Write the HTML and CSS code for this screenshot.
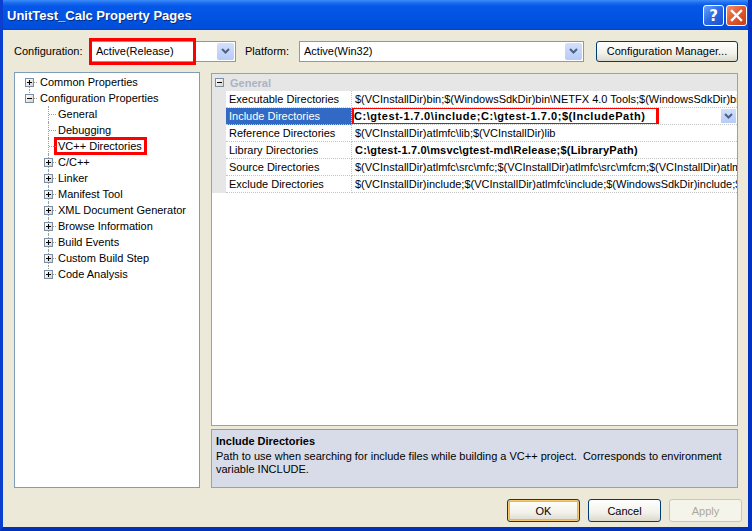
FILE: index.html
```html
<!DOCTYPE html>
<html>
<head>
<meta charset="utf-8">
<link rel="stylesheet" href="styles.css">
</head>
<body>
<div class="window">
  <div class="titlebar">
    <span class="title">UnitTest_Calc Property Pages</span>
    <div class="tbtns">
      <span class="tbtn help">?</span>
      <span class="tbtn close"><svg width="13" height="13" viewBox="0 0 13 13"><path d="M2 2 L11 11 M11 2 L2 11" stroke="#fff" stroke-width="2.4" stroke-linecap="square"/></svg></span>
    </div>
  </div>
  <div class="client">
    <div class="configrow">
      <span class="lbl cfg-lbl">Configuration:</span>
      <div class="combo combo-cfg">
        <span class="combo-text">Active(Release)</span>
        <span class="dd"><svg width="9" height="6" viewBox="0 0 9 6"><path d="M1 1 L4.5 4.5 L8 1" fill="none" stroke="#4D6185" stroke-width="2"/></svg></span>
        <span class="redbox rb-cfg"></span>
      </div>
      <span class="lbl plat-lbl">Platform:</span>
      <div class="combo combo-plat">
        <span class="combo-text">Active(Win32)</span>
        <span class="dd"><svg width="9" height="6" viewBox="0 0 9 6"><path d="M1 1 L4.5 4.5 L8 1" fill="none" stroke="#4D6185" stroke-width="2"/></svg></span>
      </div>
      <button class="btn cfgmgr">Configuration Manager...</button>
    </div>
    <div class="main">
      <div class="tree">
        <div class="trow l0"><span class="cell vbot"><span class="xbox plus"></span></span><span class="ttext">Common Properties</span></div>
        <div class="trow l0"><span class="cell vtop"><span class="xbox minus"></span></span><span class="ttext">Configuration Properties</span></div>
        <div class="trow l1"><span class="cell vfull"></span><span class="ttext">General</span></div>
        <div class="trow l1"><span class="cell vfull"></span><span class="ttext">Debugging</span></div>
        <div class="trow l1"><span class="cell vfull"></span><span class="ttext sel">VC++ Directories</span></div>
        <div class="trow l1"><span class="cell vfull"><span class="xbox plus"></span></span><span class="ttext">C/C++</span></div>
        <div class="trow l1"><span class="cell vfull"><span class="xbox plus"></span></span><span class="ttext">Linker</span></div>
        <div class="trow l1"><span class="cell vfull"><span class="xbox plus"></span></span><span class="ttext">Manifest Tool</span></div>
        <div class="trow l1"><span class="cell vfull"><span class="xbox plus"></span></span><span class="ttext">XML Document Generator</span></div>
        <div class="trow l1"><span class="cell vfull"><span class="xbox plus"></span></span><span class="ttext">Browse Information</span></div>
        <div class="trow l1"><span class="cell vfull"><span class="xbox plus"></span></span><span class="ttext">Build Events</span></div>
        <div class="trow l1"><span class="cell vfull"><span class="xbox plus"></span></span><span class="ttext">Custom Build Step</span></div>
        <div class="trow l1"><span class="cell vtop"><span class="xbox plus"></span></span><span class="ttext">Code Analysis</span></div>
      </div>
      <div class="right">
        <div class="grid">
          <div class="grow cat">
            <span class="gut"><span class="xbox minus catbox"></span></span>
            <span class="catname">General</span>
          </div>
          <div class="grow"><span class="gut"></span><span class="gl">Executable Directories</span><span class="gv">$(VCInstallDir)bin;$(WindowsSdkDir)bin\NETFX 4.0 Tools;$(WindowsSdkDir)bin;$(VSInstallDir)Common7\Tools\bin</span></div>
          <div class="grow"><span class="gut"></span><span class="gl selrow">Include Directories</span><span class="gv bold"><span class="redval">C:\gtest-1.7.0\include;C:\gtest-1.7.0;$(IncludePath)</span><span class="gdd"><svg width="9" height="6" viewBox="0 0 9 6"><path d="M1 1 L4.5 4.5 L8 1" fill="none" stroke="#4D6185" stroke-width="2"/></svg></span></span></div>
          <div class="grow"><span class="gut"></span><span class="gl">Reference Directories</span><span class="gv">$(VCInstallDir)atlmfc\lib;$(VCInstallDir)lib</span></div>
          <div class="grow"><span class="gut"></span><span class="gl">Library Directories</span><span class="gv bold lib">C:\gtest-1.7.0\msvc\gtest-md\Release;$(LibraryPath)</span></div>
          <div class="grow"><span class="gut"></span><span class="gl">Source Directories</span><span class="gv">$(VCInstallDir)atlmfc\src\mfc;$(VCInstallDir)atlmfc\src\mfcm;$(VCInstallDir)atlmfc\src\atl;$(VCInstallDir)crt\src</span></div>
          <div class="grow"><span class="gut"></span><span class="gl">Exclude Directories</span><span class="gv">$(VCInstallDir)include;$(VCInstallDir)atlmfc\include;$(WindowsSdkDir)include;$(FrameworkSDKDir)\include</span></div>
          <div class="gfill"><span class="gut"></span></div>
        </div>
        <div class="desc">
          <div class="dtitle">Include Directories</div>
          <div class="dtext">Path to use when searching for include files while building a VC++ project.&nbsp; Corresponds to environment<br>variable INCLUDE.</div>
        </div>
      </div>
    </div>
    <div class="buttons">
      <button class="btn dlg default">OK</button>
      <button class="btn dlg">Cancel</button>
      <button class="btn dlg disabled">Apply</button>
    </div>
  </div>
</div>
</body>
</html>
```
FILE: styles.css
```css
* { box-sizing: border-box; }
html, body { margin: 0; padding: 0; }
body { width: 752px; height: 531px; overflow: hidden; font-family: "Liberation Sans", Arial, sans-serif; font-size: 11px; color: #000; }

.window { width: 752px; height: 531px; display: flex; flex-direction: column; background: #0046D5; border-left: 3px solid #0A3FD0; border-right: 4px solid #0031C0; border-bottom: 4px solid #0031B8; }

.titlebar { height: 30px; display: flex; align-items: center; justify-content: space-between; padding-left: 4px; padding-right: 1px;
  background: linear-gradient(to bottom, #3C8CF8 0px, #1A6BF0 3px, #0558E8 6px, #0052E0 20px, #004EDA 28px, #0045CC 30px); }
.title { color: #fff; font-weight: bold; font-family: "Liberation Sans", Arial, sans-serif; font-size: 13px; text-shadow: 1px 1px 0 #0A2A80; }
.tbtns { display: flex; gap: 2px; padding-top: 1px; }
.tbtn { width: 21px; height: 21px; border: 1px solid #fff; border-radius: 3px; display: flex; align-items: center; justify-content: center; color: #fff; font-weight: bold; font-size: 15px; font-family: "DejaVu Sans", sans-serif; }
.help { background: linear-gradient(135deg, #6CA2F8 0%, #2B68E6 50%, #1A4FD0 100%); }
.close { background: linear-gradient(135deg, #F0916A 0%, #E2582E 50%, #C63D14 100%); }

.client { flex: 1; background: #ECE9D8; display: flex; flex-direction: column; padding: 10px 10px 0 11px; }

.configrow { display: flex; align-items: center; height: 22px; position: relative; }
.lbl { white-space: nowrap; }
.cfg-lbl { width: 77px; }
.combo { position: relative; height: 21px; background: #fff; border: 1px solid #7F9DB9; display: flex; align-items: center; }
.combo-text { padding-left: 4px; flex: 1; white-space: nowrap; }
.combo-cfg { width: 145px; }
.plat-lbl { margin-left: 9px; width: 54px; }
.combo-plat { width: 285px; }
.dd { width: 17px; height: 17px; margin-right: 1px; background: linear-gradient(#D4E0FB, #B6CBF7); border-radius: 2px; display: flex; align-items: center; justify-content: center; }
.redbox { position: absolute; border: 3px solid #FF0000; pointer-events: none; }
.rb-cfg { left: -3px; top: -4px; width: 107px; height: 27px; }
.btn { font-family: "Liberation Sans", Arial, sans-serif; font-size: 11px; color: #000; background: linear-gradient(#FFFFFF, #F2F1EA 60%, #DCD9CC); border: 1px solid #003C74; border-radius: 3px; padding: 0; }
.cfgmgr { margin-left: 12px; width: 142px; height: 21px; }

.main { display: flex; gap: 11px; margin-top: 10px; height: 416px; }
.tree { width: 186px; background: #fff; border: 1px solid #7F9DB9; padding: 1px 0 0 6px; }
.trow { height: 16px; display: flex; align-items: center; }
.trow.l1 { padding-left: 19px; }
.cell { width: 16px; height: 16px; position: relative; flex: none; }
.cell::before { content: ""; position: absolute; left: 8px; border-left: 1px dotted #A0A0A0; }
.cell::after { content: ""; position: absolute; left: 9px; top: 8px; width: 7px; border-top: 1px dotted #A0A0A0; }
.vfull::before { top: 0; height: 16px; }
.vtop::before { top: 0; height: 9px; }
.vbot::before { top: 8px; height: 8px; }
.xbox { position: absolute; left: 4px; top: 4px; width: 9px; height: 9px; border: 1px solid #7A8EA6; background: linear-gradient(135deg, #fff, #D8D4C6); z-index: 1; }
.xbox::before { content: ""; position: absolute; left: 1px; top: 3px; width: 5px; height: 1px; background: #000; }
.xbox.plus::after { content: ""; position: absolute; left: 3px; top: 1px; width: 1px; height: 5px; background: #000; }
.ttext { padding-left: 3px; white-space: nowrap; }
.l1 .ttext { padding-left: 2px; }
.ttext.sel { outline: 3px solid #FF0000; outline-offset: 0px; padding-right: 2px; margin-left: 1px; padding-left: 1px; }

.right { width: 527px; display: flex; flex-direction: column; }
.grid { height: 353px; background: #fff; border: 1px solid #A0A0A0; margin-top: 1px; display: flex; flex-direction: column; overflow: hidden; }
.grow { display: flex; height: 17px; flex: none; }
.gut { width: 14px; flex: none; background: #E6E6E6; position: relative; align-self: stretch; }
.cat { background: #E6E6E6; align-items: center; height: 17px; }
.catbox { left: 3px; top: 4px; }
.catname { padding-left: 4px; font-weight: bold; color: #A9B3C6; }
.gl { width: 126px; flex: none; padding-left: 3px; line-height: 16px; border-bottom: 1px dotted #C4C4C4; border-right: 1px dotted #C4C4C4; white-space: nowrap; overflow: hidden; }
.gl.selrow { background: #316AC5; color: #fff; }
.gv { flex: 1; padding-left: 3px; line-height: 16px; border-bottom: 1px dotted #C4C4C4; white-space: nowrap; overflow: hidden; position: relative; }
.gv.bold { font-weight: bold; font-size: 11px; letter-spacing: 0.55px; }
.gv.lib { letter-spacing: 0.2px; }
.redval { outline: 3px solid #FF0000; outline-offset: -1px; padding: 0 12px 0 1px; margin-left: -2px; display: inline-block; line-height: 16px; }
.gdd { position: absolute; right: 1px; top: 1px; width: 15px; height: 14px; background: linear-gradient(#D4E0FB, #B6CBF7); display: flex; align-items: center; justify-content: center; }
.gfill { flex: 1; display: flex; }
.gfill .gut { background: #fff; }

.desc { flex: 1; margin-top: 3px; background: #D8DCE8; border: 1px solid #A0A0A0; border-top: 1px solid #999; padding: 4px 4px 0 4px; }
.dtitle { font-weight: bold; line-height: 14px; }
.dtext { line-height: 13px; margin-top: 2px; }

.buttons { display: flex; justify-content: flex-end; gap: 8px; padding-top: 11px; margin-right: -4px; }
.dlg { width: 73px; height: 23px; }
.default { box-shadow: inset 0 0 0 1px #F8C86C, inset 0 0 0 2px #F5B440; }
.disabled { color: #ACA899; border-color: #C9C7BA; background: #F5F4EA; }
```
